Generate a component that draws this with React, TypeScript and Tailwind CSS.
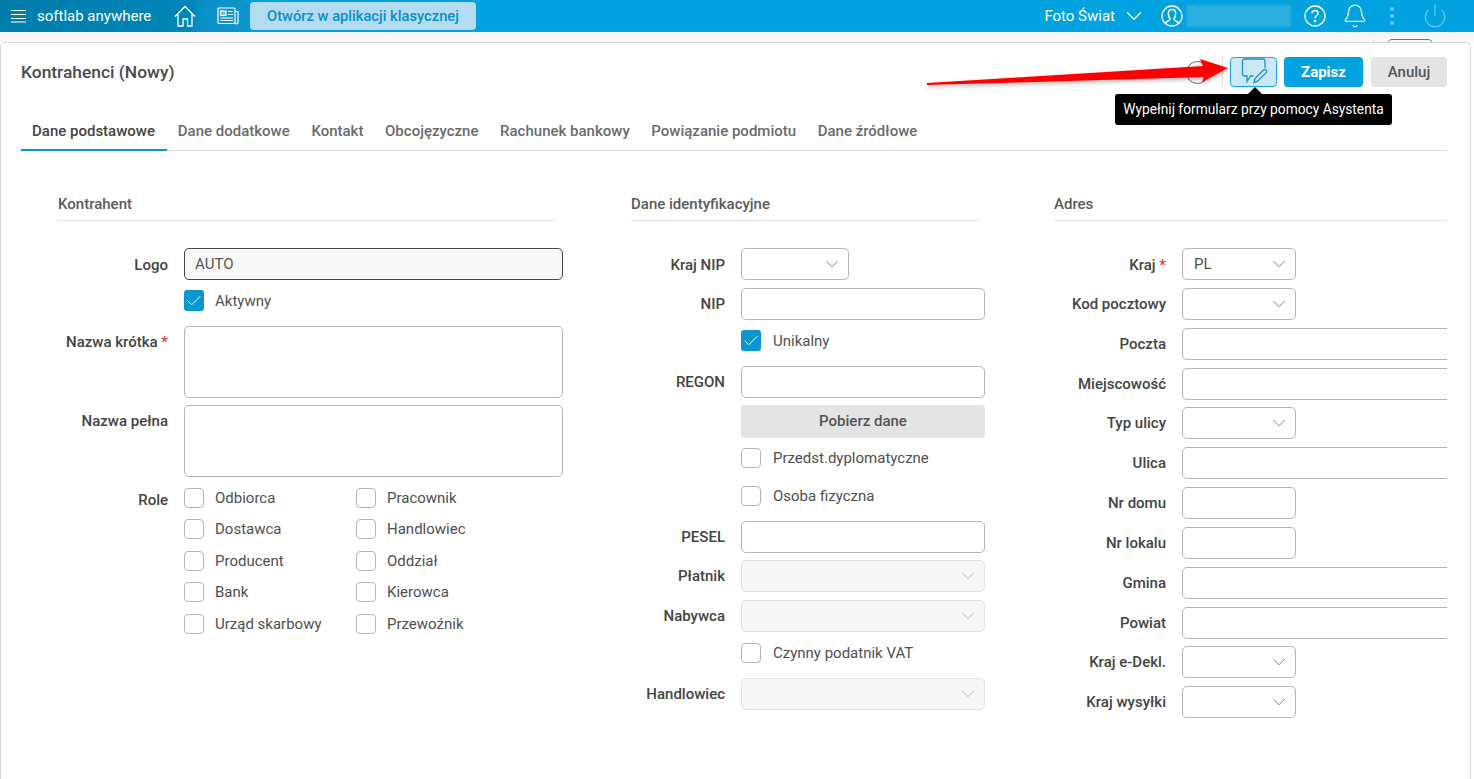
import { Bell, ChevronDown, Check, Power } from "lucide-react";
import { ReactNode } from "react";

const tabs = [
  "Dane podstawowe",
  "Dane dodatkowe",
  "Kontakt",
  "Obcojęzyczne",
  "Rachunek bankowy",
  "Powiązanie podmiotu",
  "Dane źródłowe",
];

const rolesLeft = ["Odbiorca", "Dostawca", "Producent", "Bank", "Urząd skarbowy"];
const rolesRight = ["Pracownik", "Handlowiec", "Oddział", "Kierowca", "Przewoźnik"];

function Box({ checked }: { checked?: boolean }) {
  if (checked) {
    return (
      <span className="flex h-[21px] w-[20px] shrink-0 items-center justify-center rounded-[3px] bg-[#0a96cf]">
        <Check className="h-[18px] w-[18px] text-white" strokeWidth={1.25} />
      </span>
    );
  }
  return <span className="h-[20px] w-[20px] shrink-0 rounded-[4px] border border-[#b4b4b4] bg-white" />;
}

function CheckRow({ label, checked, className }: { label: string; checked?: boolean; className: string }) {
  return (
    <div className={`flex items-center text-[15px] leading-[20px] text-[#4f4f4f] ${className}`}>
      <Box checked={checked} />
      <span>{label}</span>
    </div>
  );
}

function Label({ text, required, width, first }: { text: string; required?: boolean; width: string; first?: boolean }) {
  return (
    <div className={`${width} shrink-0 ${first ? "pt-[8px]" : "pt-[7px]"} text-right text-[15px] leading-[18px] font-medium text-[#444]`}>
      {text}
      {required && <span className="text-[#e53935]"> *</span>}
    </div>
  );
}

function Select({ value, width, disabled }: { value?: string; width: string; disabled?: boolean }) {
  return (
    <div
      className={`flex h-8 ${width} items-center justify-between rounded-[5px] border pr-[5px] pl-[11px] text-[15px] ${
        disabled ? "border-[#e2e2e2] bg-[#f7f7f7]" : "border-[#b4b4b4] bg-white text-[#4f4f4f]"
      }`}
    >
      <span>{value}</span>
      <ChevronDown className={`h-[22px] w-[22px] ${disabled ? "text-[#b5b5b5]" : "text-[#777]"}`} strokeWidth={1} />
    </div>
  );
}

function Input({ className }: { className: string }) {
  return <div className={`h-8 rounded-[5px] border border-[#b4b4b4] bg-white ${className}`} />;
}

function Row({ children, className }: { children: ReactNode; className?: string }) {
  return <div className={`flex gap-4 ${className ?? ""}`}>{children}</div>;
}

function SectionTitle({ title, className }: { title: string; className: string }) {
  return (
    <div className={`h-[38px] border-b border-[#e4e4e4] pt-[12px] text-[15px] leading-[18px] font-medium text-[#5a5a5a] ${className}`}>
      {title}
    </div>
  );
}

function TopBar() {
  return (
    <div className="flex h-8 items-center bg-[#00a3e0] text-white">
      <div className="flex h-8 w-[250px] items-center bg-[linear-gradient(100deg,#007dac_0%,#0086b8_76%,#0c91c6_80%,#0c97ce_100%)]">
        <svg className="ml-[11px] h-[14px] w-[15px]" viewBox="0 0 15 14" stroke="white" strokeWidth="1.2">
          <path d="M0 1.500h15M0 5.500h15M0 9.500h15M0 13h15" />
        </svg>
        <span className="ml-[11px] text-[15px]">softlab anywhere</span>
        <svg className="ml-[23px] h-[22px] w-[22px]" viewBox="0 0 22 22" fill="none" stroke="white" strokeWidth="1.3">
          <path d="M1 11.500 11 1.500l10 10M4 9v12h5v-7h4.500v7H18V9" />
        </svg>
        <svg className="ml-[21px] h-[18px] w-[22px]" viewBox="0 0 22 18" fill="none" stroke="white" strokeWidth="1.2">
          <rect x="1" y="1" width="17" height="15.500" rx="1" />
          <path d="M18 4.500h3v11a1.500 1.500 0 0 1-3 0" />
          <rect x="3.500" y="4" width="5.500" height="4.500" fill="white" fillOpacity="0.4" />
          <path d="M11 4.500h5M11 7.500h5M3.500 11h12.500M3.500 13.500h12.500" />
        </svg>
      </div>
      <div className="flex h-7 w-[226px] items-center justify-center rounded-[4px] bg-[#b3dcf3] text-[14.700px] font-medium text-[#0a8fc8]">
        Otwórz w aplikacji klasycznej
      </div>
      <div className="ml-auto flex items-center pr-[26px]">
        <span className="text-[15px]">Foto Świat</span>
        <ChevronDown className="ml-[6px] h-[26px] w-[26px]" strokeWidth={1} />
        <svg className="ml-[14px] h-[22px] w-[22px]" viewBox="0 0 22 22" fill="none" stroke="white" strokeWidth="1.4">
          <circle cx="11" cy="11" r="10" />
          <path d="M4.500 18.500c.3-2.500 4.500-2.800 4.700-4.500C8 12.800 7.300 11 7.300 8.500 7.300 6 9 4.500 11 4.500S14.700 6 14.700 8.500c0 2.500-.7 4.300-1.900 5.500.2 1.700 4.400 2 4.700 4.500" />
        </svg>
        <div className="mr-[13px] ml-[4px] h-[22px] w-[104px] bg-[#2bb0e2] blur-[1px]" />
        <svg className="h-[22px] w-[22px]" viewBox="0 0 22 22" fill="none" stroke="white" strokeWidth="1.4">
          <circle cx="11" cy="11" r="10" />
          <path d="M8 8.500C8 6.500 9.500 5.500 11 5.500s3 1 3 2.800c0 2.400-3 2.500-3 5" />
          <circle cx="11" cy="16" r="0.6" fill="white" />
        </svg>
        <Bell className="ml-[16px] h-[26px] w-[26px]" strokeWidth={1.1} />
        <div className="ml-[22px] flex h-[18px] flex-col justify-between">
          <span className="h-1 w-1 rounded-full bg-[#66c8ec]" />
          <span className="h-1 w-1 rounded-full bg-[#66c8ec]" />
          <span className="h-1 w-1 rounded-full bg-[#66c8ec]" />
        </div>
        <Power className="ml-[28px] h-[26px] w-[26px] text-[#66c8ec]" strokeWidth={1.1} />
      </div>
    </div>
  );
}

export default function App() {
  return (
    <div className="relative h-[779px] w-[1474px] overflow-hidden bg-white font-['Roboto',sans-serif]">
      <TopBar />
      {/* strip above card */}
      <div className="flex h-[10px] justify-end bg-[linear-gradient(#f2f2f2,#fafafa)] pr-[41px]">
        <div className="mt-[7px] mr-[13px] w-px bg-[#d9d9d9]" />
        <div className="mt-[7px] h-4 w-[46px] rounded-t-[5px] border border-[#0a96cf]" />
      </div>
      <div className="relative mr-[3px] h-[737px] rounded-t-[5px] border-x border-t border-[#d9d9d9] bg-white">
        {/* header */}
        <div className="flex h-[44px] items-end pt-[14px] pr-[23px] pl-[20px]">
          <h1 className="mb-[5px] text-[17.400px] leading-[20px] font-medium text-[#4a4a4a]">Kontrahenci (Nowy)</h1>
          <div className="ml-auto flex items-center">
            <span className="h-[23px] w-[23px] rounded-full border border-[#666]" />
            <span className="mr-[7px] ml-[13px] h-[30px] w-px bg-[#e0e0e0]" />
            <button className="flex h-[30px] w-[47px] items-center justify-center rounded-[4px] border border-[#1aa7e0] bg-[#cce8f6]">
              <svg className="h-[28px] w-[28px]" viewBox="0 0 28 28" fill="none" stroke="#1a93c6" strokeWidth="1.3">
                <path d="M13.500 18H10.500L7 23.500V18H4.500A2 2 0 0 1 2.500 16V3A2 2 0 0 1 4.500 1H23A2 2 0 0 1 25 3V10" />
                <path d="M14 24.500l1-4 8.500-8.500a1.800 1.800 0 0 1 2.600 2.600l-8.500 8.500z" />
              </svg>
            </button>
            <button className="ml-[7px] h-[30px] w-[79px] rounded-[4px] bg-[#00a3e0] text-[15px] font-bold text-white">Zapisz</button>
            <button className="ml-[8px] h-[30px] w-[76px] rounded-[4px] bg-[#e4e4e4] text-[15px] font-medium text-[#555]">Anuluj</button>
          </div>
        </div>

        {/* tabs */}
        <div className="mt-[19px] mr-[23px] ml-[20px] flex h-[45px] border-b border-[#dcdcdc] text-[15px] font-medium text-[#6b6b6b]">
          {tabs.map((tab, i) => (
            <div
              key={tab}
              className={`h-[45px] pt-[16px] leading-[18px] ${
                i === 0 ? "border-b-2 border-[#0a96cf] pr-[12px] pl-[11px] text-[#444]" : "px-[10.800px]"
              }`}
            >
              {tab}
            </div>
          ))}
        </div>

        {/* form */}
        <div className="mt-[32px] flex">
          {/* Kontrahent */}
          <div className="ml-[57px] w-[505px]">
            <SectionTitle title="Kontrahent" className="w-[498px]" />
            <div className="mt-[27px] flex flex-col">
              <Row>
                <Label text="Logo" width="w-[110px]" first />
                <div className="flex h-8 w-[379px] items-center rounded-[5px] border border-[#444] bg-[#f8f8f8] pl-[10px] text-[15px] text-[#555]">
                  AUTO
                </div>
              </Row>
              <CheckRow label="Aktywny" checked className="mt-[10px] ml-[126px] gap-[11px]" />
              <Row className="mt-[15px]">
                <Label text="Nazwa krótka" required width="w-[110px]" />
                <div className="h-[72px] w-[379px] rounded-[5px] border border-[#b4b4b4]" />
              </Row>
              <Row className="mt-[7px]">
                <Label text="Nazwa pełna" width="w-[110px]" />
                <div className="h-[72px] w-[379px] rounded-[5px] border border-[#b4b4b4]" />
              </Row>
              <Row className="mt-[11px]">
                <Label text="Role" width="w-[110px] -mt-[4px]" />
                <div className="flex w-[156px] flex-col gap-[11.400px]">
                  {rolesLeft.map((r) => (
                    <CheckRow key={r} label={r} className="gap-[11px]" />
                  ))}
                </div>
                <div className="flex flex-col gap-[11.400px]">
                  {rolesRight.map((r) => (
                    <CheckRow key={r} label={r} className="gap-[11px]" />
                  ))}
                </div>
              </Row>
            </div>
          </div>

          {/* Dane identyfikacyjne */}
          <div className="ml-[68px] w-[354px]">
            <SectionTitle title="Dane identyfikacyjne" className="w-[348px]" />
            <div className="mt-[27px] flex flex-col">
              <Row>
                <Label text="Kraj NIP" width="w-[94px]" first />
                <Select width="w-[108px]" />
              </Row>
              <Row className="mt-2">
                <Label text="NIP" width="w-[94px]" />
                <Input className="w-[244px]" />
              </Row>
              <CheckRow label="Unikalny" checked className="mt-[10px] ml-[110px] gap-[12px]" />
              <Row className="mt-[15px]">
                <Label text="REGON" width="w-[94px]" />
                <Input className="w-[244px]" />
              </Row>
              <button className="mt-[7px] ml-[110px] h-[33px] w-[244px] rounded-[4px] bg-[#e4e4e4] text-[15px] font-medium text-[#555]">
                Pobierz dane
              </button>
              <CheckRow label="Przedst.dyplomatyczne" className="mt-[10px] ml-[110px] gap-[12px]" />
              <CheckRow label="Osoba fizyczna" className="mt-[18px] ml-[110px] gap-[12px]" />
              <Row className="mt-[15px]">
                <Label text="PESEL" width="w-[94px]" />
                <Input className="w-[244px]" />
              </Row>
              <Row className="mt-[7px]">
                <Label text="Płatnik" width="w-[94px]" />
                <Select width="w-[244px]" disabled />
              </Row>
              <Row className="mt-2">
                <Label text="Nabywca" width="w-[94px]" />
                <Select width="w-[244px]" disabled />
              </Row>
              <CheckRow label="Czynny podatnik VAT" className="mt-[11px] ml-[110px] gap-[12px]" />
              <Row className="mt-[15px]">
                <Label text="Handlowiec" width="w-[94px]" />
                <Select width="w-[244px]" disabled />
              </Row>
            </div>
          </div>

          {/* Adres */}
          <div className="ml-[69px] w-[393px] overflow-hidden">
            <SectionTitle title="Adres" className="w-full" />
            <div className="mt-[27px] flex flex-col gap-[7.850px]">
              <Row>
                <Label text="Kraj" required width="w-[112px]" first />
                <Select value="PL" width="w-[114px]" />
              </Row>
              <Row>
                <Label text="Kod pocztowy" width="w-[112px]" />
                <Select width="w-[114px]" />
              </Row>
              <Row>
                <Label text="Poczta" width="w-[112px]" />
                <Input className="w-[300px] shrink-0" />
              </Row>
              <Row>
                <Label text="Miejscowość" width="w-[112px]" />
                <Input className="w-[300px] shrink-0" />
              </Row>
              <Row>
                <Label text="Typ ulicy" width="w-[112px]" />
                <Select width="w-[114px]" />
              </Row>
              <Row>
                <Label text="Ulica" width="w-[112px]" />
                <Input className="w-[300px] shrink-0" />
              </Row>
              <Row>
                <Label text="Nr domu" width="w-[112px]" />
                <Input className="w-[114px]" />
              </Row>
              <Row>
                <Label text="Nr lokalu" width="w-[112px]" />
                <Input className="w-[114px]" />
              </Row>
              <Row>
                <Label text="Gmina" width="w-[112px]" />
                <Input className="w-[300px] shrink-0" />
              </Row>
              <Row>
                <Label text="Powiat" width="w-[112px]" />
                <Input className="w-[300px] shrink-0" />
              </Row>
              <Row>
                <Label text="Kraj e-Dekl." width="w-[112px]" />
                <Select width="w-[114px]" />
              </Row>
              <Row>
                <Label text="Kraj wysyłki" width="w-[112px]" />
                <Select width="w-[114px]" />
              </Row>
            </div>
          </div>
        </div>
      </div>

      {/* tooltip */}
      <div className="absolute top-[94px] left-[1115px] flex h-[31px] w-[277px] items-center justify-center rounded-[3px] bg-black text-[13.750px] text-white">
        <span className="absolute -top-[7px] left-[133px] h-0 w-0 border-x-[7px] border-b-[7px] border-x-transparent border-b-black" />
        Wypełnij formularz przy pomocy Asystenta
      </div>

      {/* red annotation arrow */}
      <svg className="pointer-events-none absolute top-0 left-0 h-[779px] w-[1474px] drop-shadow-[0_2px_2px_rgba(0,0,0,0.3)]" viewBox="0 0 1474 779">
        <polygon points="927,83 1203,66 1200,59 1228,68 1202,82 1204,77 927,85" fill="#ff0000" />
      </svg>
    </div>
  );
}
